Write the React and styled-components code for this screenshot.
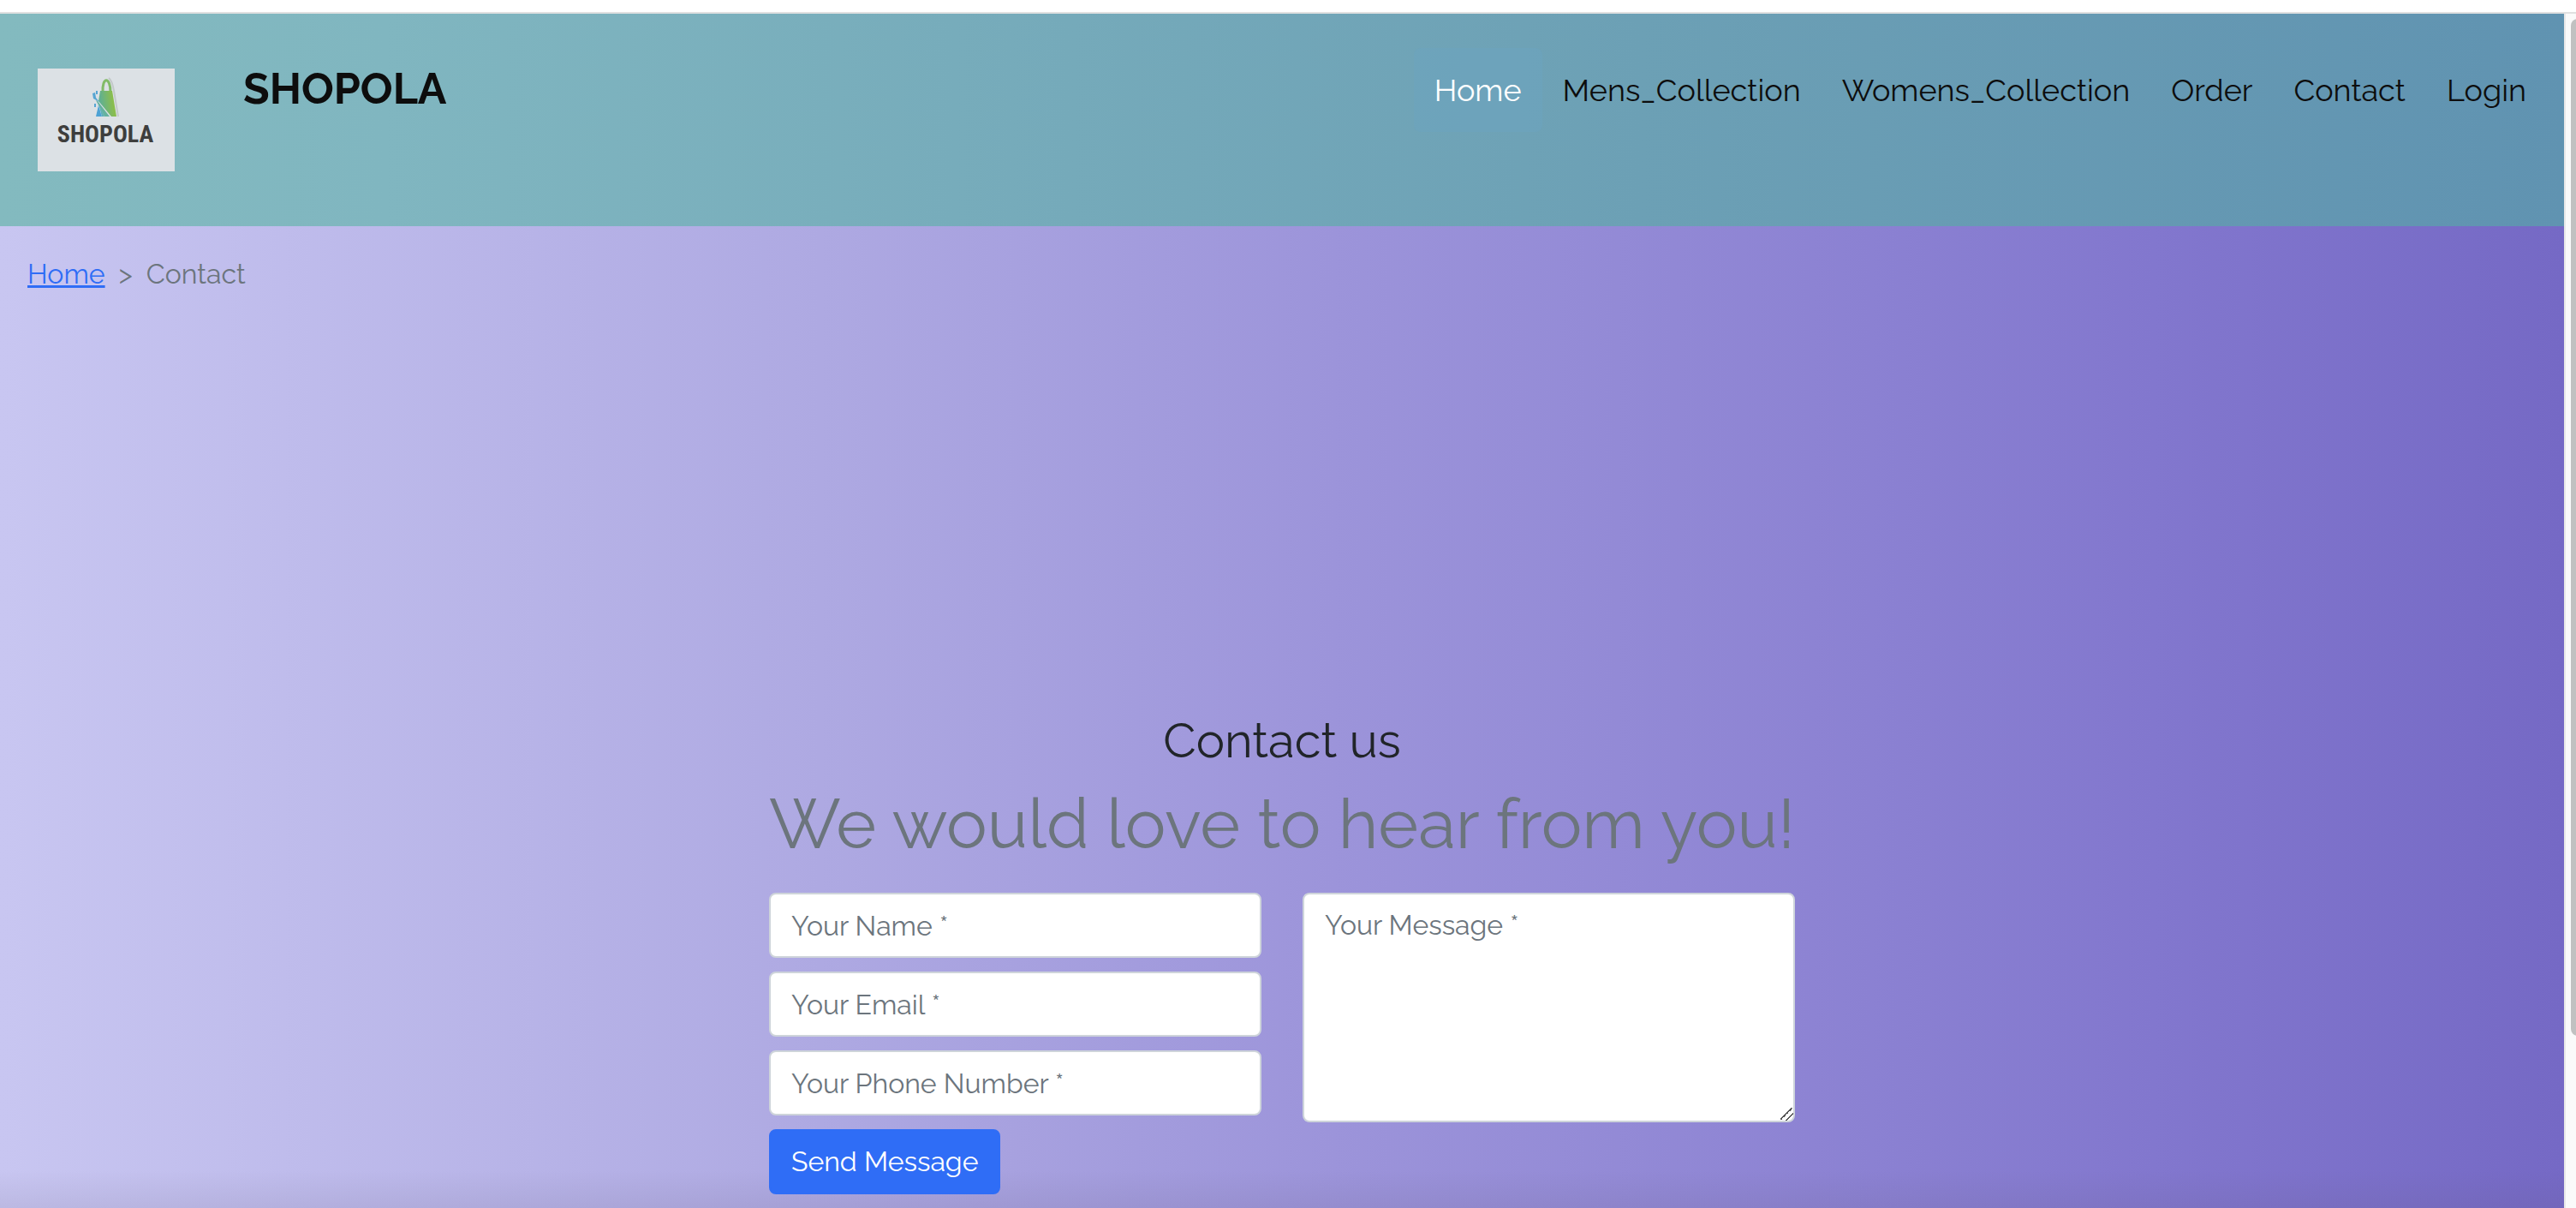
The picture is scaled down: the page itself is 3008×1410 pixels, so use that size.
import React from "react";
import styled, { createGlobalStyle } from "styled-components";

const fontStack = `Raleway, Lato, "Open Sans", sans-serif`;

const GlobalStyle = createGlobalStyle`
  *, *::before, *::after { box-sizing: border-box; }
  html, body { margin: 0; background: #fff; }
  body { font-family: ${fontStack}; font-size: 32px; line-height: 48px; color: #212529; overflow: hidden; }
`;

const Screen = styled.div`
  display: flex;
  flex-direction: column;
  height: 100vh;
`;

const TopStrip = styled.div`
  flex: 0 0 16px;
  background: #fff;
  border-bottom: 2px solid #e0e0e0;
`;

const Viewport = styled.div`
  flex: 1;
  min-height: 0;
  display: flex;
`;

const Page = styled.div`
  flex: 1;
  min-width: 0;
  display: flex;
  flex-direction: column;
  background:
    linear-gradient(to top, rgba(90, 80, 110, 0.11), rgba(90, 80, 110, 0) 44px),
    linear-gradient(to right, #c8c6f1 0%, #aea9e2 32%, #9c94da 52%, #8277ce 84%, #7569c5 100%);
`;

const ScrollTrack = styled.div`
  flex: 0 0 14px;
  padding: 6px 0 0 6px;
  background: #fafafa;
  border-left: 2px solid #e8e8e8;
  overflow: hidden;
`;

const ScrollThumb = styled.div`
  width: 16px;
  height: 85.5%;
  border-radius: 8px;
  background: #c1c1c1;
`;

const Header = styled.header`
  display: flex;
  align-items: flex-start;
  height: 248px;
  padding: 40px 20px 0 44px;
  background: linear-gradient(to right, #83babf 0%, #80b6c0 15%, #6ca0b5 64%, #6093b1 100%);
`;

const LogoBox = styled.svg`
  flex: none;
  width: 160px;
  height: 120px;
  margin-top: 24px;
  background: #dce1e5;
`;

const Wordmark = styled.text`
  font-family: "Liberation Sans Narrow", "Roboto Condensed", "Open Sans Condensed", Lato, sans-serif;
  font-size: 28px;
  font-weight: 700;
  fill: #3e3e3d;
`;

const Brand = styled.a`
  margin: 14px auto 0 80px;
  font-size: 50px;
  line-height: 68px;
  font-weight: 700;
  color: #0d0d0d;
  text-decoration: none;
`;

const Nav = styled.nav`
  display: flex;
`;

const NavLink = styled.a`
  padding: 22px 24px;
  border-radius: 8px;
  font-size: 36px;
  line-height: 54px;
  text-decoration: none;
  color: ${({ $active }) => ($active ? "#fff" : "#0d0d0d")};
  background: ${({ $active }) => ($active ? "rgba(108, 164, 192, 0.5)" : "transparent")};
`;

const Breadcrumb = styled.nav`
  display: flex;
  gap: 16px;
  padding: 32px;
  color: #6c757d;
`;

const CrumbLink = styled.a`
  color: #2f6df6;
  text-decoration: underline;
  text-decoration-thickness: 3px;
`;

const Main = styled.main`
  flex: 1;
  display: flex;
  flex-direction: column;
  align-items: center;
  padding-top: 454px;
`;

const ContactForm = styled.form`
  width: 1198px;
  max-width: 100%;
`;

const Title = styled.h1`
  margin: 0 0 16px;
  font-size: 56px;
  line-height: 68px;
  font-weight: 400;
  text-align: center;
`;

const Subtitle = styled.h2`
  margin: 0 0 32px;
  font-size: 80px;
  line-height: 96px;
  font-weight: 400;
  color: #6c757d;
  white-space: nowrap;
`;

const Columns = styled.div`
  display: grid;
  grid-template-columns: 1fr 1fr;
  column-gap: 48px;
`;

const Fields = styled.div`
  display: flex;
  flex-direction: column;
  align-items: flex-start;
  gap: 16px;
`;

const Field = styled.input`
  display: block;
  width: 100%;
  height: ${({ $tall }) => ($tall ? "268px" : "76px")};
  padding: 12px 24px;
  border: 2px solid #ced4da;
  border-radius: 8px;
  background: #fff;
  color: #212529;
  font: inherit;
  resize: vertical;
  &::placeholder { color: #6c757d; opacity: 1; }
  &::-webkit-resizer {
    background: linear-gradient(135deg, transparent 42%, #555 42%, #555 50%, transparent 50%, transparent 68%, #555 68%, #555 76%, transparent 76%);
  }
`;

const Submit = styled.button`
  height: 76px;
  padding: 12px 24px;
  border: 2px solid #2f6df6;
  border-radius: 8px;
  background: #2f6df6;
  color: #fff;
  font: inherit;
`;

const links = ["Home", "Mens_Collection", "Womens_Collection", "Order", "Contact", "Login"];

const fields = [
  { type: "text", name: "name", label: "Your Name *" },
  { type: "email", name: "email", label: "Your Email *" },
  { type: "tel", name: "phone", label: "Your Phone Number *" },
];

function Logo() {
  return (
    <LogoBox viewBox="0 0 160 120" role="img" aria-label="Shopola logo">
      <defs>
        <linearGradient id="bag" x1="0" y1="0.6" x2="1" y2="0.4">
          <stop offset="0" stopColor="#58ad9f" />
          <stop offset="0.7" stopColor="#84bb58" />
          <stop offset="1" stopColor="#90c03c" />
        </linearGradient>
      </defs>
      <path d="M83 11C87 14 88 20 89 26l5 30" fill="none" stroke="#c3c8c9" strokeWidth="2" />
      <path d="M76 28C75 9 85 9 85 28" fill="none" stroke="#82bb68" strokeWidth="3" />
      <path d="M73 26h14l5 30h-6L71 38z" fill="url(#bag)" />
      <path d="M70 38l14 18h-6L68 37z" fill="#66b29e" />
      <path d="M71 41l7 15h-3z" fill="#5fb0b5" />
      <path d="M71 43l4 13h-7z" fill="#4ea2d4" />
      <path d="M64 29l3-1 1 6 4 5-7-4z" fill="#57a5d2" />
      <path d="M68 26h2v4h-2zM66 41h2v4h-2z" fill="#57a5d2" />
      <Wordmark x="79" y="86" textAnchor="middle">SHOPOLA</Wordmark>
    </LogoBox>
  );
}

export default function App() {
  return (
    <Screen>
      <GlobalStyle />
      <TopStrip />
      <Viewport>
        <Page>
          <Header>
            <Logo />
            <Brand href="#home">SHOPOLA</Brand>
            <Nav aria-label="Main">
              {links.map((label, i) => (
                <NavLink key={label} href={`#${label}`} $active={i === 0}>
                  {label}
                </NavLink>
              ))}
            </Nav>
          </Header>
          <Breadcrumb aria-label="Breadcrumb">
            <CrumbLink href="#home">Home</CrumbLink>
            <span>&gt;</span>
            <span>Contact</span>
          </Breadcrumb>
          <Main>
            <ContactForm>
              <Title>Contact us</Title>
              <Subtitle>We would love to hear from you!</Subtitle>
              <Columns>
                <Fields>
                  {fields.map(({ type, name, label }) => (
                    <Field key={name} type={type} name={name} placeholder={label} aria-label={label} />
                  ))}
                  <Submit type="button">Send Message</Submit>
                </Fields>
                <Field as="textarea" $tall name="message" placeholder="Your Message *" aria-label="Your Message *" />
              </Columns>
            </ContactForm>
          </Main>
        </Page>
        <ScrollTrack>
          <ScrollThumb />
        </ScrollTrack>
      </Viewport>
    </Screen>
  );
}
